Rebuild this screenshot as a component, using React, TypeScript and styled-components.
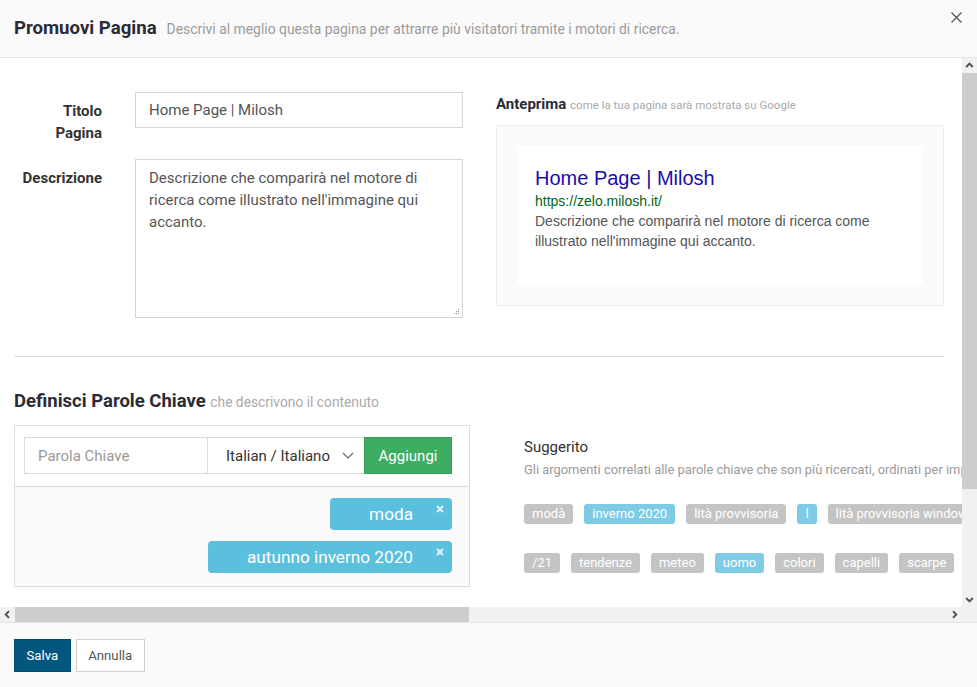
import React from "react";
import styled, { createGlobalStyle } from "styled-components";

const GlobalStyle = createGlobalStyle`
  html, body { margin: 0; padding: 0; }
  body {
    font-family: Roboto, "Noto Sans", Arial, sans-serif;
    background: #fff;
    color: #333;
  }
  * { box-sizing: border-box; }
`;

const Modal = styled.div`
  position: relative;
  width: 977px;
  height: 687px;
  display: flex;
  flex-direction: column;
  background: #fff;
  overflow: hidden;
`;

const Header = styled.header`
  flex: none;
  height: 58px;
  display: flex;
  align-items: center;
  padding: 0 14px;
  background: #fafafa;
  border-bottom: 1px solid #e3e3e3;
`;

const HeaderText = styled.div`
  display: flex;
  align-items: baseline;
  gap: 10px;
  margin-top: -1px;
`;

const Title = styled.h1`
  margin: 0;
  font-size: 18.6px;
  font-weight: 700;
  color: #2b2b35;
`;

const Subtitle = styled.span`
  font-size: 13.9px;
  color: #9a9a9a;
`;

const CloseButton = styled.button`
  position: absolute;
  top: 11px;
  right: 14px;
  width: 13px;
  height: 13px;
  padding: 0;
  border: none;
  background: transparent;
  display: flex;
  align-items: center;
  justify-content: center;
  cursor: pointer;
`;

/* scroll frame with a drawn scrollbar pair */
const ScrollFrame = styled.div`
  flex: 1;
  min-height: 0;
  display: grid;
  grid-template-columns: minmax(0, 1fr) 15px;
  grid-template-rows: minmax(0, 1fr) 15px;
`;

const Viewport = styled.main`
  overflow: hidden;
  background: #fff;
`;

const VBar = styled.div`
  display: flex;
  flex-direction: column;
  background: #f1f1f1;
`;

const HBar = styled.div`
  display: flex;
  background: #f1f1f1;
`;

const Corner = styled.div`
  background: #f1f1f1;
`;

const ArrowButton = styled.div`
  flex: none;
  width: 15px;
  height: 15px;
  display: flex;
  align-items: center;
  justify-content: center;
`;

const VThumb = styled.div`
  flex: none;
  height: 416px;
  background: #cdcdcd;
`;

const HThumb = styled.div`
  flex: none;
  width: 454px;
  background: #cdcdcd;
`;

const Track = styled.div`
  flex: 1;
`;

const Content = styled.div`
  width: 958px;
  padding: 34px 14px 40px;
`;

const TopGrid = styled.div`
  display: grid;
  grid-template-columns: 449px 448px;
  column-gap: 33px;
`;

const FormCol = styled.div`
  display: flex;
  flex-direction: column;
  gap: 15px;
`;

const FormRow = styled.div`
  display: grid;
  grid-template-columns: 88px 328px;
  column-gap: 33px;
  align-items: start;
`;

const Label = styled.label`
  text-align: right;
  padding-top: 8px;
  font-size: 15px;
  font-weight: 700;
  line-height: 22px;
  color: #333;
`;

const TextInput = styled.input`
  height: 36px;
  width: 100%;
  padding: 0 13px;
  border: 1px solid #d6d6d6;
  font-family: inherit;
  font-size: 15px;
  color: #555;
  background: #fff;
  outline: none;
`;

const TextAreaWrap = styled.div`
  position: relative;
`;

const TextArea = styled.textarea`
  display: block;
  width: 100%;
  height: 159px;
  padding: 7px 13px;
  border: 1px solid #d6d6d6;
  font-family: inherit;
  font-size: 15px;
  line-height: 22px;
  color: #555;
  resize: none;
  outline: none;
`;

const Grip = styled.span`
  position: absolute;
  right: 3px;
  bottom: 3px;
  display: flex;
`;

const PreviewCol = styled.div`
  padding-top: 2px;
`;

const SmallHeading = styled.div`
  font-size: 15px;
  font-weight: 700;
  line-height: 20px;
  color: #2b2b35;
  margin-bottom: 10px;
`;

const Hint = styled.span`
  font-size: 11.5px;
  font-weight: 400;
  color: #aaa;
`;

const PreviewBox = styled.div`
  padding: 20px;
  background: #fafafa;
  border: 1px solid #ececec;
`;

const SerpCard = styled.div`
  padding: 20px 18px 34px;
  background: #fff;
  border-radius: 4px;
  font-family: "Liberation Sans", Arial, sans-serif;
`;

const SerpTitle = styled.div`
  font-size: 20px;
  line-height: 25px;
  color: #1a0dab;
`;

const SerpUrl = styled.div`
  font-size: 14px;
  line-height: 20px;
  color: #006621;
`;

const SerpDesc = styled.div`
  font-size: 14px;
  line-height: 20px;
  color: #545454;
`;

const Divider = styled.hr`
  width: 930px;
  margin: 38px 0 0;
  border: none;
  border-top: 1px solid #dcdcdc;
`;

const SectionHeading = styled.h2`
  margin: 32px 0 11px;
  font-size: 18.5px;
  font-weight: 700;
  line-height: 24px;
  color: #2b2b35;
`;

const SectionHint = styled.span`
  font-size: 13.8px;
  font-weight: 400;
  color: #aaa;
`;

const KeywordsRow = styled.div`
  display: flex;
  align-items: flex-start;
`;

const KeywordBox = styled.div`
  flex: none;
  width: 456px;
  border: 1px solid #dcdcdc;
`;

const InputBar = styled.div`
  display: flex;
  padding: 11px 17px 12px 9px;
  background: #fff;
  border-bottom: 1px solid #dcdcdc;
`;

const KeywordInput = styled.input`
  width: 184px;
  height: 37px;
  padding: 0 13px;
  border: 1px solid #dcdcdc;
  font-family: inherit;
  font-size: 15px;
  color: #555;
  outline: none;
  &::placeholder { color: #999; }
`;

const LangSelect = styled.div`
  width: 156px;
  height: 37px;
  display: flex;
  align-items: center;
  justify-content: space-between;
  padding: 0 10px 0 18px;
  border: 1px solid #dcdcdc;
  border-left: none;
  border-right: none;
  font-size: 15px;
  color: #333;
  background: #fff;
`;

const AddButton = styled.button`
  width: 88px;
  height: 37px;
  border: 1px solid #36a15a;
  background: #3dad62;
  color: #fff;
  font-family: inherit;
  font-size: 15px;
  padding: 0;
  cursor: pointer;
`;

const TagArea = styled.div`
  display: flex;
  flex-direction: column;
  align-items: flex-end;
  gap: 11px;
  padding: 11px 17px 13px;
  background: #fafafa;
`;

const KeywordTag = styled.div`
  position: relative;
  height: 32px;
  line-height: 32px;
  padding: 0 39px;
  background: #5bc0de;
  color: #fff;
  font-size: 17.2px;
  border-radius: 4px;
`;

const TagRemove = styled.span`
  position: absolute;
  top: 7px;
  right: 8px;
  display: flex;
`;

const Suggest = styled.div`
  margin-left: 54px;
  padding-top: 12px;
`;

const SuggestTitle = styled.div`
  font-size: 15px;
  line-height: 20px;
  color: #333;
`;

const SuggestDesc = styled.div`
  margin-top: 4px;
  font-size: 12.9px;
  line-height: 18px;
  color: #9a9a9a;
  white-space: nowrap;
`;

const SuggestRows = styled.div`
  display: flex;
  flex-direction: column;
  gap: 29px;
  margin-top: 25px;
`;

const SuggestRow = styled.div`
  display: flex;
  gap: 11px;
  white-space: nowrap;
`;

const SuggestTag = styled.span<{ $active?: boolean }>`
  flex: none;
  height: 20px;
  line-height: 20px;
  padding: 0 8px;
  font-size: 13px;
  color: #fff;
  border-radius: 3px;
  background: ${(p) => (p.$active ? "#7ecbe6" : "#c4c4c4")};
`;

const Footer = styled.footer`
  flex: none;
  height: 65px;
  display: flex;
  align-items: center;
  gap: 5px;
  padding: 0 14px;
  background: #fafafa;
  border-top: 1px solid #e3e3e3;
`;

const FooterButton = styled.button<{ $primary?: boolean }>`
  height: 33px;
  padding: 0 11.5px;
  font-family: inherit;
  font-size: 13.2px;
  cursor: pointer;
  border: 1px solid ${(p) => (p.$primary ? "#024a6b" : "#d0d0d0")};
  background: ${(p) => (p.$primary ? "#03577e" : "#fff")};
  color: ${(p) => (p.$primary ? "#fff" : "#555")};
`;

const row1: { label: string; active?: boolean }[] = [
  { label: "modà" },
  { label: "inverno 2020", active: true },
  { label: "lità provvisoria" },
  { label: "l", active: true },
  { label: "lità provvisoria windows 10" },
];

const row2: { label: string; active?: boolean }[] = [
  { label: "/21" },
  { label: "tendenze" },
  { label: "meteo" },
  { label: "uomo", active: true },
  { label: "colori" },
  { label: "capelli" },
  { label: "scarpe" },
];

const keywords = ["moda", "autunno inverno 2020"];

const Chevron = ({ dir }: { dir: "up" | "down" | "left" | "right" }) => {
  const rot = { up: 0, right: 90, down: 180, left: 270 }[dir];
  return (
    <svg width="9" height="9" viewBox="0 0 9 9">
      <path
        d="M1.2 6 L4.5 2.7 L7.8 6"
        stroke="#505050"
        strokeWidth="1.9"
        fill="none"
        transform={`rotate(${rot} 4.5 4.5)`}
      />
    </svg>
  );
};

export default function App() {
  return (
    <>
      <GlobalStyle />
      <Modal>
        <Header>
          <HeaderText>
            <Title>Promuovi Pagina</Title>
            <Subtitle>
              Descrivi al meglio questa pagina per attrarre più visitatori tramite i motori di ricerca.
            </Subtitle>
          </HeaderText>
        </Header>
        <CloseButton aria-label="Chiudi">
          <svg width="11" height="11" viewBox="0 0 11 11">
            <path d="M0.5 0.5 L10.5 10.5 M10.5 0.5 L0.5 10.5" stroke="#555" strokeWidth="1.3" fill="none" />
          </svg>
        </CloseButton>

        <ScrollFrame>
          <Viewport>
            <Content>
              <TopGrid>
                <FormCol>
                  <FormRow>
                    <Label>
                      Titolo
                      <br />
                      Pagina
                    </Label>
                    <TextInput defaultValue="Home Page | Milosh" />
                  </FormRow>
                  <FormRow>
                    <Label>Descrizione</Label>
                    <TextAreaWrap>
                      <TextArea defaultValue="Descrizione che comparirà nel motore di ricerca come illustrato nell'immagine qui accanto." />
                      <Grip>
                        <svg width="7" height="7" viewBox="0 0 7 7" fill="#9a9a9a">
                          <rect x="5" y="1" width="1" height="1" />
                          <rect x="3" y="3" width="1" height="1" />
                          <rect x="5" y="3" width="1" height="1" />
                          <rect x="1" y="5" width="1" height="1" />
                          <rect x="3" y="5" width="1" height="1" />
                          <rect x="5" y="5" width="1" height="1" />
                        </svg>
                      </Grip>
                    </TextAreaWrap>
                  </FormRow>
                </FormCol>

                <PreviewCol>
                  <SmallHeading>
                    Anteprima <Hint>come la tua pagina sarà mostrata su Google</Hint>
                  </SmallHeading>
                  <PreviewBox>
                    <SerpCard>
                      <SerpTitle>Home Page | Milosh</SerpTitle>
                      <SerpUrl>https://zelo.milosh.it/</SerpUrl>
                      <SerpDesc>
                        Descrizione che comparirà nel motore di ricerca come illustrato nell'immagine qui accanto.
                      </SerpDesc>
                    </SerpCard>
                  </PreviewBox>
                </PreviewCol>
              </TopGrid>

              <Divider />

              <SectionHeading>
                Definisci Parole Chiave <SectionHint>che descrivono il contenuto</SectionHint>
              </SectionHeading>

              <KeywordsRow>
                <KeywordBox>
                  <InputBar>
                    <KeywordInput placeholder="Parola Chiave" />
                    <LangSelect>
                      <span>Italian / Italiano</span>
                      <svg width="12" height="7" viewBox="0 0 12 7">
                        <path d="M1 1 L6 6 L11 1" stroke="#666" strokeWidth="1.1" fill="none" />
                      </svg>
                    </LangSelect>
                    <AddButton>Aggiungi</AddButton>
                  </InputBar>
                  <TagArea>
                    {keywords.map((k) => (
                      <KeywordTag key={k}>
                        {k}
                        <TagRemove>
                          <svg width="8" height="8" viewBox="0 0 8 8">
                            <path d="M1 1 L7 7 M7 1 L1 7" stroke="#e6f5fa" strokeWidth="2" fill="none" />
                          </svg>
                        </TagRemove>
                      </KeywordTag>
                    ))}
                  </TagArea>
                </KeywordBox>

                <Suggest>
                  <SuggestTitle>Suggerito</SuggestTitle>
                  <SuggestDesc>
                    Gli argomenti correlati alle parole chiave che son più ricercati, ordinati per importanza.
                  </SuggestDesc>
                  <SuggestRows>
                    <SuggestRow>
                      {row1.map((t, i) => (
                        <SuggestTag key={i} $active={t.active}>
                          {t.label}
                        </SuggestTag>
                      ))}
                    </SuggestRow>
                    <SuggestRow>
                      {row2.map((t, i) => (
                        <SuggestTag key={i} $active={t.active}>
                          {t.label}
                        </SuggestTag>
                      ))}
                    </SuggestRow>
                  </SuggestRows>
                </Suggest>
              </KeywordsRow>
            </Content>
          </Viewport>

          <VBar>
            <ArrowButton>
              <Chevron dir="up" />
            </ArrowButton>
            <VThumb />
            <Track />
            <ArrowButton>
              <Chevron dir="down" />
            </ArrowButton>
          </VBar>

          <HBar>
            <ArrowButton>
              <Chevron dir="left" />
            </ArrowButton>
            <HThumb />
            <Track />
            <ArrowButton>
              <Chevron dir="right" />
            </ArrowButton>
          </HBar>
          <Corner />
        </ScrollFrame>

        <Footer>
          <FooterButton $primary>Salva</FooterButton>
          <FooterButton>Annulla</FooterButton>
        </Footer>
      </Modal>
    </>
  );
}
